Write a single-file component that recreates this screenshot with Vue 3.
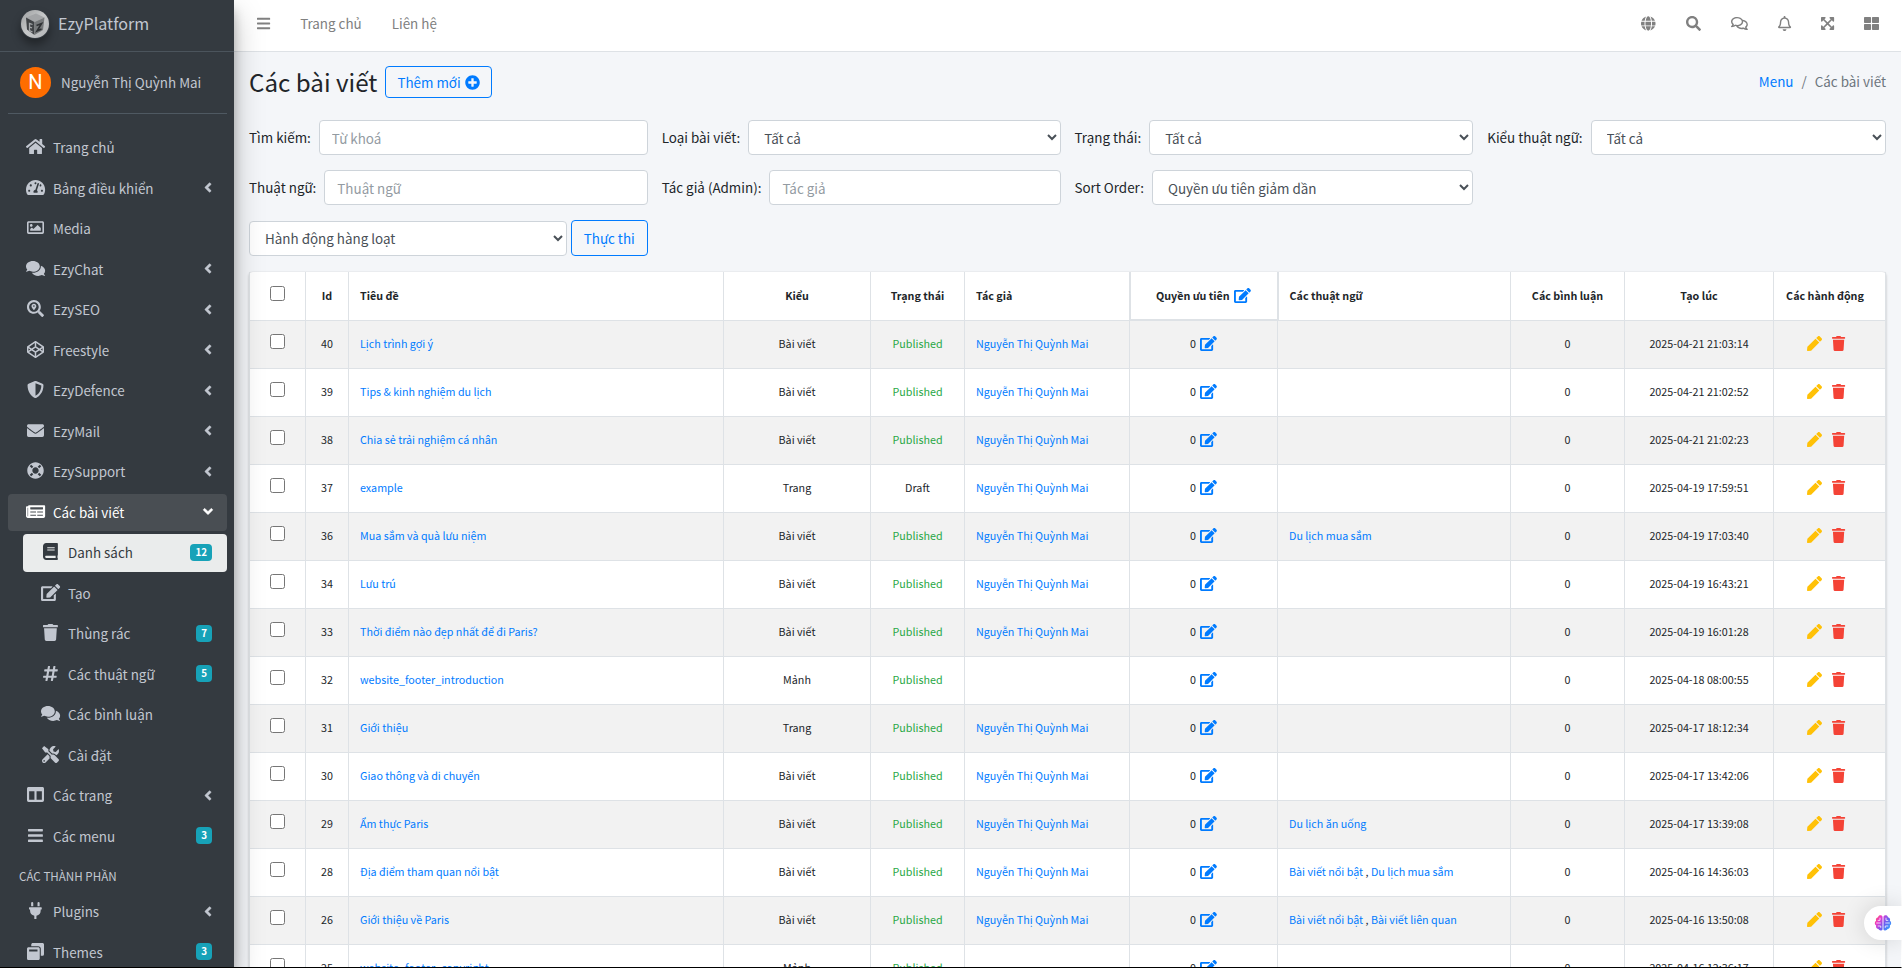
<script setup>
const IC = {
  home: [576, 'M280.37 148.26L96 300.11V464a16 16 0 0 0 16 16l112.06-.29a16 16 0 0 0 15.92-16V368a16 16 0 0 1 16-16h64a16 16 0 0 1 16 16v95.64a16 16 0 0 0 16 16.05L464 480a16 16 0 0 0 16-16V300L295.67 148.26a12.19 12.19 0 0 0-15.3 0zM571.6 251.47L488 182.56V44.05a12 12 0 0 0-12-12h-56a12 12 0 0 0-12 12v72.61L318.47 43a48 48 0 0 0-61 0L4.34 251.47a12 12 0 0 0-1.6 16.9l25.5 31A12 12 0 0 0 45.15 301l235.22-193.74a12.19 12.19 0 0 1 15.3 0L530.9 301a12 12 0 0 0 16.9-1.6l25.5-31a12 12 0 0 0-1.7-16.93z'],
  gauge: [576, 'M288 32C128.94 32 0 160.94 0 320c0 52.8 14.25 102.26 39.06 144.8 5.61 9.62 16.3 15.2 27.44 15.2h443c11.14 0 21.83-5.58 27.44-15.2C561.75 422.26 576 372.8 576 320c0-159.06-128.94-288-288-288zm0 64c14.71 0 26.58 10.13 30.32 23.65-1.11 2.26-2.64 4.23-3.45 6.67l-9.22 27.67c-5.13 3.49-10.97 6.01-17.64 6.01-17.67 0-32-14.33-32-32S270.33 96 288 96zM96 384c-17.67 0-32-14.33-32-32s14.33-32 32-32 32 14.33 32 32-14.33 32-32 32zm48-160c-17.67 0-32-14.33-32-32s14.33-32 32-32 32 14.33 32 32-14.33 32-32 32zm246.77-72.41l-61.33 184C343.13 347.33 352 364.54 352 384c0 11.72-3.38 22.55-8.88 32H232.88c-5.5-9.45-8.88-20.28-8.88-32 0-33.94 26.5-61.43 59.9-63.59l61.34-184.01c4.17-12.56 17.73-19.45 30.36-15.17 12.57 4.19 19.35 17.79 15.17 30.36zm14.66 57.2l15.52-46.55c3.47-1.29 7.13-2.23 11.05-2.23 17.67 0 32 14.33 32 32s-14.33 32-32 32c-11.38-.01-20.89-6.28-26.57-15.22zM480 384c-17.67 0-32-14.33-32-32s14.33-32 32-32 32 14.33 32 32-14.33 32-32 32z'],
  image: [512, 'M464 64H48C21.49 64 0 85.49 0 112v288c0 26.51 21.49 48 48 48h416c26.51 0 48-21.49 48-48V112c0-26.51-21.49-48-48-48zm-6 336H54a6 6 0 0 1-6-6V118a6 6 0 0 1 6-6h404a6 6 0 0 1 6 6v276a6 6 0 0 1-6 6zM128 152c-22.091 0-40 17.909-40 40s17.909 40 40 40 40-17.909 40-40-17.909-40-40-40zM96 352h320v-80l-87.515-87.515c-4.686-4.686-12.284-4.686-16.971 0L192 304l-39.515-39.515c-4.686-4.686-12.284-4.686-16.971 0L96 304v48z'],
  comments: [576, 'M416 192c0-88.4-93.1-160-208-160S0 103.6 0 192c0 34.3 14.1 65.9 38 92-13.4 30.2-35.5 54.2-35.8 54.5-2.2 2.3-2.8 5.7-1.5 8.7S4.8 352 8 352c36.6 0 66.9-12.3 88.7-25 32.2 15.7 70.3 25 111.3 25 114.9 0 208-71.6 208-160zm122 220c23.9-26 38-57.7 38-92 0-66.9-53.5-124.2-129.3-148.1.9 6.6 1.3 13.3 1.3 20.1 0 105.9-107.7 192-240 192-10.8 0-21.3-.8-31.7-1.9C207.8 439.6 281.8 480 368 480c41 0 79.1-9.2 111.3-25 21.8 12.7 52.1 25 88.7 25 3.2 0 6.1-1.9 7.3-4.8 1.3-2.9.7-6.3-1.5-8.7-.3-.3-22.4-24.2-35.8-54.5z'],
  commentsLine: [576, 'M532 386.2c27.5-27.1 44-61.1 44-98.2 0-80-76.5-146.1-176.2-157.9C368.3 72.5 294.3 32 208 32 93.1 32 0 103.6 0 192c0 37 16.5 71 44 98.2-15.3 30.7-37.3 54.5-37.7 54.9-6.3 6.7-8.1 16.5-4.4 25 3.6 8.5 12 14 21.2 14 53.5 0 96.7-20.2 125.2-38.8 9.2 2.1 18.7 3.7 28.4 4.9C208.1 407.6 281.8 448 368 448c20.8 0 40.8-2.4 59.8-6.8C456.3 459.7 499.4 480 553 480c9.2 0 17.5-5.5 21.2-14 3.6-8.5 1.9-18.3-4.4-25-.4-.3-22.5-24.1-37.8-54.8zm-392.8-92.3L122.1 305c-14.1 9.1-28.5 16.3-43.1 21.4 2.7-4.7 5.4-9.7 8-14.8l15.5-31.1L77.7 256C64.2 242.6 48 220.7 48 192c0-60.7 73.3-112 160-112s160 51.3 160 112-73.3 112-160 112c-16.5 0-33-1.9-49-5.6l-19.8-4.5zM498.3 352l-24.7 24.4 15.5 31.1c2.6 5.1 5.3 10.1 8 14.8-14.6-5.1-29-12.3-43.1-21.4l-17.1-11.1-19.9 4.6c-16 3.7-32.5 5.6-49 5.6-54 0-102.2-20.1-131.3-49.7C338 339.5 416 272.9 416 192c0-3.4-.4-6.7-.7-10C479.7 196.5 528 238.8 528 288c0 28.7-16.2 50.6-29.7 64z'],
  seo: [512, 'M505.04 442.66l-99.71-99.69c-4.5-4.5-10.6-7-17-7h-16.3c27.6-35.3 44-79.69 44-127.99C416.03 93.09 322.92 0 208.02 0S0 93.09 0 207.98s93.11 207.98 208.02 207.98c48.3 0 92.71-16.4 128.01-44v16.3c0 6.4 2.5 12.5 7 17l99.71 99.69c9.4 9.4 24.6 9.4 33.9 0l28.3-28.3c9.4-9.4 9.4-24.59.1-33.99zm-297.02-90.7c-79.54 0-144-64.34-144-143.98 0-79.53 64.35-143.98 144-143.98 79.54 0 144 64.34 144 143.98 0 79.53-64.35 143.98-144 143.98zm.02-239.96c-40.78 0-73.84 33.05-73.84 73.83 0 32.96 48.26 93.05 66.75 114.86a9.24 9.24 0 0 0 14.18 0c18.49-21.81 66.75-81.89 66.75-114.86 0-40.78-33.06-73.83-73.84-73.83zm0 96c-13.26 0-24-10.75-24-24 0-13.26 10.75-24 24-24s24 10.74 24 24c0 13.25-10.75 24-24 24z'],
  codepen: [512, 'M502.285 159.704l-234-156c-7.987-4.915-16.511-4.96-24.571 0l-234 156C3.714 163.703 0 170.847 0 177.989v155.999c0 7.143 3.714 14.286 9.715 18.286l234 156.022c7.987 4.915 16.511 4.96 24.571 0l234-156.022c6-3.999 9.715-11.143 9.715-18.286V177.989c-.001-7.142-3.715-14.286-9.716-18.285zM278 63.131l172.286 114.858-76.857 51.429L278 165.703V63.131zm-44 0v102.572l-95.429 63.715-76.857-51.429L234 63.131zM44 219.132l55.143 36.857L44 292.847v-73.715zm190 229.715L61.714 333.989l76.857-51.429L234 346.275v102.572zm22-140.858l-77.715-52 77.715-52 77.715 52-77.715 52zm22 140.858V346.275l95.429-63.715 76.857 51.429L278 448.847zm190-156l-55.143-36.857L468 219.132v73.715z'],
  shield: [512, 'M466.5 83.7l-192-80a48.15 48.15 0 0 0-36.9 0l-192 80C27.7 91.1 16 108.6 16 128c0 198.5 114.5 335.7 221.5 380.3 11.8 4.9 25.1 4.9 36.9 0C360.1 472.6 496 349.3 496 128c0-19.4-11.7-36.9-29.5-44.3zM256.1 446.3l-.1-381 175.9 73.3c-3.3 151.4-82.1 261.1-175.8 307.7z'],
  mail: [512, 'M502.3 190.8c3.9-3.1 9.7-.2 9.7 4.7V400c0 26.5-21.5 48-48 48H48c-26.5 0-48-21.5-48-48V195.6c0-5 5.7-7.8 9.7-4.7 22.4 17.4 52.1 39.5 154.1 113.6 21.1 15.4 56.7 47.8 92.2 47.6 35.7.3 72-32.8 92.3-47.6 102-74.1 131.6-96.3 154-113.7zM256 320c23.2.4 56.6-29.2 73.4-41.4 132.7-96.3 142.8-104.7 173.4-128.7 5.8-4.5 9.2-11.5 9.2-18.9v-19c0-26.5-21.5-48-48-48H48c-26.5 0-48 21.5-48 48v19c0 7.4 3.4 14.3 9.2 18.9 30.6 23.9 40.7 32.4 173.4 128.7 16.8 12.2 50.2 41.8 73.4 41.4z'],
  ring: [512, 'M256 8C119.033 8 8 119.033 8 256s111.033 248 248 248 248-111.033 248-248S392.967 8 256 8zm173.696 119.559l-63.399 63.399c-10.987-18.559-26.67-34.252-45.255-45.255l63.399-63.399a218.396 218.396 0 0 1 45.255 45.255zM256 352c-53.019 0-96-42.981-96-96s42.981-96 96-96 96 42.981 96 96-42.981 96-96 96zM127.559 82.304l63.399 63.399c-18.559 10.987-34.252 26.67-45.255 45.255l-63.399-63.399a218.372 218.372 0 0 1 45.255-45.255zM82.304 384.441l63.399-63.399c10.987 18.559 26.67 34.252 45.255 45.255l-63.399 63.399a218.396 218.396 0 0 1-45.255-45.255zm302.137 45.255l-63.399-63.399c18.559-10.987 34.252-26.67 45.255-45.255l63.399 63.399a218.403 218.403 0 0 1-45.255 45.255z'],
  news: [576, 'M552 64H88c-13.255 0-24 10.745-24 24v8H24c-13.255 0-24 10.745-24 24v272c0 30.928 25.072 56 56 56h472c26.51 0 48-21.49 48-48V88c0-13.255-10.745-24-24-24zM56 400a8 8 0 0 1-8-8V144h16v248a8 8 0 0 1-8 8zm236-16H140c-6.627 0-12-5.373-12-12v-8c0-6.627 5.373-12 12-12h152c6.627 0 12 5.373 12 12v8c0 6.627-5.373 12-12 12zm208 0H348c-6.627 0-12-5.373-12-12v-8c0-6.627 5.373-12 12-12h152c6.627 0 12 5.373 12 12v8c0 6.627-5.373 12-12 12zm-208-96H140c-6.627 0-12-5.373-12-12v-8c0-6.627 5.373-12 12-12h152c6.627 0 12 5.373 12 12v8c0 6.627-5.373 12-12 12zm208 0H348c-6.627 0-12-5.373-12-12v-8c0-6.627 5.373-12 12-12h152c6.627 0 12 5.373 12 12v8c0 6.627-5.373 12-12 12zm0-96H140c-6.627 0-12-5.373-12-12v-40c0-6.627 5.373-12 12-12h360c6.627 0 12 5.373 12 12v40c0 6.627-5.373 12-12 12z'],
  book: [448, 'M448 360V24c0-13.3-10.7-24-24-24H96C43 0 0 43 0 96v320c0 53 43 96 96 96h328c13.3 0 24-10.7 24-24v-16c0-7.5-3.5-14.3-8.9-18.7-4.2-15.4-4.2-59.3 0-74.7 5.4-4.3 8.9-11.1 8.9-18.6zM128 134c0-3.3 2.7-6 6-6h212c3.3 0 6 2.7 6 6v20c0 3.3-2.7 6-6 6H134c-3.3 0-6-2.7-6-6v-20zm0 64c0-3.3 2.7-6 6-6h212c3.3 0 6 2.7 6 6v20c0 3.3-2.7 6-6 6H134c-3.3 0-6-2.7-6-6v-20zm253.4 250H96c-17.7 0-32-14.3-32-32 0-17.6 14.4-32 32-32h285.4c-1.9 17.1-1.9 46.9 0 64z'],
  edit: [576, 'M402.6 83.2l90.2 90.2c3.8 3.8 3.8 10 0 13.8L274.4 405.6l-92.8 10.3c-12.4 1.4-22.9-9.1-21.5-21.5l10.3-92.8L388.8 83.2c3.8-3.8 10-3.8 13.8 0zm162-22.9l-48.8-48.8c-15.2-15.2-39.9-15.2-55.2 0l-35.4 35.4c-3.8 3.8-3.8 10 0 13.8l90.2 90.2c3.8 3.8 10 3.8 13.8 0l35.4-35.4c15.2-15.3 15.2-40 0-55.2zM384 346.2V448H64V128h229.8c3.2 0 6.2-1.3 8.5-3.5l40-40c7.6-7.6 2.2-20.5-8.5-20.5H48C21.5 64 0 85.5 0 112v352c0 26.5 21.5 48 48 48h352c26.5 0 48-21.5 48-48V306.2c0-10.7-12.9-16-20.5-8.5l-40 40c-2.2 2.3-3.5 5.3-3.5 8.5z'],
  trash: [448, 'M432 32H312l-9.4-18.7A24 24 0 0 0 281.1 0H166.8a23.72 23.72 0 0 0-21.4 13.3L136 32H16A16 16 0 0 0 0 48v32a16 16 0 0 0 16 16h416a16 16 0 0 0 16-16V48a16 16 0 0 0-16-16zM53.2 467a48 48 0 0 0 47.9 45h245.8a48 48 0 0 0 47.9-45L416 128H32z'],
  hash: [448, 'M440.667 182.109l7.143-40c1.313-7.355-4.342-14.109-11.813-14.109h-74.81l14.623-81.891C377.123 38.754 371.468 32 363.997 32h-40.632a12 12 0 0 0-11.813 9.891L296.175 128H197.54l14.623-81.891C213.477 38.754 207.822 32 200.35 32h-40.632a12 12 0 0 0-11.813 9.891L132.528 128H53.432a12 12 0 0 0-11.813 9.891l-7.143 40C33.163 185.246 38.818 192 46.289 192h74.81L98.242 320H19.146a12 12 0 0 0-11.813 9.891l-7.143 40C-1.123 377.246 4.532 384 12.003 384h74.81L72.19 465.891C70.877 473.246 76.532 480 84.003 480h40.632a12 12 0 0 0 11.813-9.891L151.826 384h98.634l-14.623 81.891C234.523 473.246 240.178 480 247.65 480h40.632a12 12 0 0 0 11.813-9.891L315.472 384h79.096a12 12 0 0 0 11.813-9.891l7.143-40c1.313-7.355-4.342-14.109-11.813-14.109h-74.81l22.857-128h79.096a12 12 0 0 0 11.813-9.891zM261.889 320h-98.634l22.857-128h98.634l-22.857 128z'],
  tools: [512, 'M501.1 395.7L384 278.6c-23.1-23.1-57.6-27.6-85.4-13.9L192 158.1V96L64 0 0 64l96 128h62.1l106.6 106.6c-13.6 27.8-9.2 62.3 13.9 85.4l117.1 117.1c14.6 14.6 38.2 14.6 52.7 0l52.7-52.7c14.5-14.6 14.5-38.2 0-52.7zM331.7 225c28.3 0 54.9 11 74.9 31l19.4 19.4c15.8-6.9 30.8-16.5 43.8-29.5 37.1-37.1 49.7-89.3 37.9-136.7-2.2-9-13.5-12.1-20.1-5.5l-74.4 74.4-67.9-11.3L334 98.9l74.4-74.4c6.6-6.6 3.4-17.9-5.7-20.2-47.4-11.7-99.6.9-136.6 37.9-28.5 28.5-41.9 66.1-41.2 103.6l82.1 82.1c8.1-1.9 16.5-2.9 24.7-2.9zm-103.9 82l-56.7-56.7L18.7 402.8c-25 25-25 65.5 0 90.5s65.5 25 90.5 0l123.6-123.6c-7.6-19.9-9.9-41.6-5-62.7zM64 472c-13.2 0-24-10.8-24-24 0-13.3 10.7-24 24-24s24 10.7 24 24c0 13.2-10.7 24-24 24z'],
  columns: [512, 'M464 32H48C21.49 32 0 53.49 0 80v352c0 26.51 21.49 48 48 48h416c26.51 0 48-21.49 48-48V80c0-26.51-21.49-48-48-48zM224 416H64V160h160v256zm224 0H288V160h160v256z'],
  bars: [448, 'M16 132h416c8.837 0 16-7.163 16-16V76c0-8.837-7.163-16-16-16H16C7.163 60 0 67.163 0 76v40c0 8.837 7.163 16 16 16zm0 160h416c8.837 0 16-7.163 16-16v-40c0-8.837-7.163-16-16-16H16c-8.837 0-16 7.163-16 16v40c0 8.837 7.163 16 16 16zm0 160h416c8.837 0 16-7.163 16-16v-40c0-8.837-7.163-16-16-16H16c-8.837 0-16 7.163-16 16v40c0 8.837 7.163 16 16 16z'],
  plug: [384, 'M320 32a32 32 0 0 0-64 0v96h64zm48 128H16A16 16 0 0 0 0 176v32a16 16 0 0 0 16 16h16v32a160.07 160.07 0 0 0 128 156.8V512h64v-99.2A160.07 160.07 0 0 0 352 256v-32h16a16 16 0 0 0 16-16v-32a16 16 0 0 0-16-16zM128 32a32 32 0 0 0-64 0v96h64z'],
  restore: [512, 'M512 48v288c0 26.5-21.5 48-48 48h-48V176c0-44.1-35.9-80-80-80H128V48c0-26.5 21.5-48 48-48h288c26.5 0 48 21.5 48 48zM384 176v288c0 26.5-21.5 48-48 48H48c-26.5 0-48-21.5-48-48V176c0-26.5 21.5-48 48-48h288c26.5 0 48 21.5 48 48zm-68 28c0-6.6-5.4-12-12-12H76c-6.6 0-12 5.4-12 12v52h252v-52z'],
  angle: [256, 'M31.7 239l136-136c9.4-9.4 24.6-9.4 33.9 0l22.6 22.6c9.4 9.4 9.4 24.6 0 33.9L127.9 256l96.4 96.4c9.4 9.4 9.4 24.6 0 33.9L201.7 409c-9.4 9.4-24.6 9.4-33.9 0l-136-136c-9.5-9.4-9.5-24.6-.1-34z'],
  globe: [496, 'M336.5 160C322 70.7 287.8 8 248 8s-74 62.7-88.5 152h177zM152 256c0 22.2 1.2 43.5 3.3 64h185.3c2.1-20.5 3.3-41.8 3.3-64s-1.2-43.5-3.3-64H155.3c-2.1 20.5-3.3 41.8-3.3 64zm324.7-96c-28.6-67.9-86.5-120.4-158-141.6 24.4 33.8 41.2 84.7 50 141.6h108zM177.2 18.4C105.8 39.6 47.8 92.1 19.3 160h108c8.7-56.9 25.5-107.8 49.9-141.6zM487.4 192H372.7c2.1 21 3.3 42.5 3.3 64s-1.2 43-3.3 64h114.6c5.5-20.5 8.6-41.8 8.6-64s-3.1-43.5-8.5-64zM120 256c0-21.5 1.2-43 3.3-64H8.6C3.2 212.5 0 233.8 0 256s3.2 43.5 8.6 64h114.6c-2-21-3.2-42.5-3.2-64zm39.5 96c14.5 89.3 48.7 152 88.5 152s74-62.7 88.5-152h-177zm159.3 141.6c71.4-21.2 129.4-73.7 158-141.6h-108c-8.8 56.9-25.6 107.8-50 141.6zM19.3 352c28.6 67.9 86.5 120.4 158 141.6-24.4-33.8-41.2-84.7-50-141.6h-108z'],
  search: [512, 'M505 442.7L405.3 343c-4.5-4.5-10.6-7-17-7H372c27.6-35.3 44-79.7 44-128C416 93.1 322.9 0 208 0S0 93.1 0 208s93.1 208 208 208c48.3 0 92.7-16.4 128-44v16.3c0 6.4 2.5 12.5 7 17l99.7 99.7c9.4 9.4 24.6 9.4 33.9 0l28.3-28.3c9.4-9.4 9.4-24.6.1-34zM208 336c-70.7 0-128-57.2-128-128 0-70.7 57.2-128 128-128 70.7 0 128 57.2 128 128 0 70.7-57.2 128-128 128z'],
  bell: [448, 'M439.39 362.29c-19.32-20.76-55.47-51.99-55.47-154.29 0-77.7-54.48-139.9-127.94-155.16V32c0-17.67-14.32-32-31.98-32s-31.98 14.33-31.98 32v20.84C118.56 68.1 64.08 130.3 64.08 208c0 102.3-36.15 133.53-55.47 154.29-6 6.45-8.66 14.16-8.61 21.71.11 16.4 12.98 32 32.1 32h383.8c19.12 0 32-15.6 32.1-32 .05-7.55-2.61-15.27-8.61-21.71zM67.53 368c21.22-27.97 44.42-74.33 44.53-159.42 0-.2-.06-.38-.06-.58 0-61.86 50.14-112 112-112s112 50.14 112 112c0 .2-.06.38-.06.58.11 85.1 23.31 131.46 44.53 159.42H67.53zM224 512c35.32 0 63.97-28.65 63.97-64H160.03c0 35.35 28.65 64 63.97 64z'],
  expand: [448, 'M448 344v112a23.94 23.94 0 0 1-24 24H312c-21.39 0-32.09-25.9-17-41l36.2-36.2L224 295.6 116.77 402.9 153 439c15.09 15.1 4.39 41-17 41H24a23.94 23.94 0 0 1-24-24V344c0-21.4 25.89-32.1 41-17l36.19 36.2L184.46 256 77.18 148.7 41 185c-15.1 15.1-41 4.4-41-17V56a23.94 23.94 0 0 1 24-24h112c21.39 0 32.09 25.9 17 41l-36.2 36.2L224 216.4l107.23-107.3L295 73c-15.09-15.1-4.39-41 17-41h112a23.94 23.94 0 0 1 24 24v112c0 21.4-25.89 32.1-41 17l-36.19-36.2L263.54 256l107.28 107.3L407 327.1c15.1-15.2 41-4.5 41 16.9z'],
  grid: [512, 'M296 32h192c13.255 0 24 10.745 24 24v160c0 13.255-10.745 24-24 24H296c-13.255 0-24-10.745-24-24V56c0-13.255 10.745-24 24-24zm-80 0H24C10.745 32 0 42.745 0 56v160c0 13.255 10.745 24 24 24h192c13.255 0 24-10.745 24-24V56c0-13.255-10.745-24-24-24zM0 296v160c0 13.255 10.745 24 24 24h192c13.255 0 24-10.745 24-24V296c0-13.255-10.745-24-24-24H24c-13.255 0-24 10.745-24 24zm296 184h192c13.255 0 24-10.745 24-24V296c0-13.255-10.745-24-24-24H296c-13.255 0-24 10.745-24 24v160c0 13.255 10.745 24 24 24z'],
  plus: [512, 'M256 8C119 8 8 119 8 256s111 248 248 248 248-111 248-248S393 8 256 8zm144 276c0 6.6-5.4 12-12 12h-92v92c0 6.6-5.4 12-12 12h-56c-6.6 0-12-5.4-12-12v-92h-92c-6.6 0-12-5.4-12-12v-56c0-6.6 5.4-12 12-12h92v-92c0-6.6 5.4-12 12-12h56c6.6 0 12 5.4 12 12v92h92c6.6 0 12 5.4 12 12v56z'],
  pen: [512, 'M290.74 93.24l128.02 128.02-277.99 277.99-114.14 12.6C11.35 513.54-1.56 500.62.14 485.34l12.7-114.22 277.9-277.88zm207.2-19.06l-60.11-60.11c-18.75-18.75-49.16-18.75-67.91 0l-56.55 56.55 128.02 128.02 56.55-56.55c18.75-18.76 18.75-49.16 0-67.91z'],
}

const FaIcon = (props) => {
  const [w, d] = IC[props.name]
  return h('svg', { viewBox: `0 0 ${w} 512`, class: 'fa', fill: 'currentColor', 'aria-hidden': 'true' }, [h('path', { d })])
}
FaIcon.props = ['name']

const menu = [
  { icon: 'home', text: 'Trang chủ' },
  { icon: 'gauge', text: 'Bảng điều khiển', arrow: true },
  { icon: 'image', text: 'Media' },
  { icon: 'comments', text: 'EzyChat', arrow: true },
  { icon: 'seo', text: 'EzySEO', arrow: true },
  { icon: 'codepen', text: 'Freestyle', arrow: true },
  { icon: 'shield', text: 'EzyDefence', arrow: true },
  { icon: 'mail', text: 'EzyMail', arrow: true },
  { icon: 'ring', text: 'EzySupport', arrow: true },
  { icon: 'news', text: 'Các bài viết', arrow: true, open: true },
  { icon: 'book', text: 'Danh sách', badge: 12, sub: true, current: true },
  { icon: 'edit', text: 'Tạo', sub: true },
  { icon: 'trash', text: 'Thùng rác', badge: 7, sub: true },
  { icon: 'hash', text: 'Các thuật ngữ', badge: 5, sub: true },
  { icon: 'comments', text: 'Các bình luận', sub: true },
  { icon: 'tools', text: 'Cài đặt', sub: true },
  { icon: 'columns', text: 'Các trang', arrow: true },
  { icon: 'bars', text: 'Các menu', badge: 3 },
  { header: 'CÁC THÀNH PHẦN' },
  { icon: 'plug', text: 'Plugins', arrow: true },
  { icon: 'restore', text: 'Themes', badge: 3 },
]

const tools = [
  ['globe', 'Ngôn ngữ'],
  ['search', 'Tìm kiếm'],
  ['commentsLine', 'Tin nhắn'],
  ['bell', 'Thông báo'],
  ['expand', 'Toàn màn hình'],
  ['grid', 'Ứng dụng'],
]

const filters = [
  { id: 'f-key', label: 'Tìm kiếm:', hint: 'Từ khoá' },
  { id: 'f-type', label: 'Loại bài viết:', option: 'Tất cả' },
  { id: 'f-status', label: 'Trạng thái:', option: 'Tất cả' },
  { id: 'f-termtype', label: 'Kiểu thuật ngữ:', option: 'Tất cả' },
  { id: 'f-term', label: 'Thuật ngữ:', hint: 'Thuật ngữ' },
  { id: 'f-author', label: 'Tác giả (Admin):', hint: 'Tác giả' },
  { id: 'f-sort', label: 'Sort Order:', option: 'Quyền ưu tiên giảm dần' },
]

const me = 'Nguyễn Thị Quỳnh Mai'
const rows = [
  [40, 'Lịch trình gợi ý', 'Bài viết', me, [], '2025-04-21 21:03:14'],
  [39, 'Tips & kinh nghiệm du lịch', 'Bài viết', me, [], '2025-04-21 21:02:52'],
  [38, 'Chia sẻ trải nghiệm cá nhân', 'Bài viết', me, [], '2025-04-21 21:02:23'],
  [37, 'example', 'Trang', me, [], '2025-04-19 17:59:51', true],
  [36, 'Mua sắm và quà lưu niệm', 'Bài viết', me, ['Du lịch mua sắm'], '2025-04-19 17:03:40'],
  [34, 'Lưu trú', 'Bài viết', me, [], '2025-04-19 16:43:21'],
  [33, 'Thời điểm nào đẹp nhất để đi Paris?', 'Bài viết', me, [], '2025-04-19 16:01:28'],
  [32, 'website_footer_introduction', 'Mảnh', '', [], '2025-04-18 08:00:55'],
  [31, 'Giới thiệu', 'Trang', me, [], '2025-04-17 18:12:34'],
  [30, 'Giao thông và di chuyển', 'Bài viết', me, [], '2025-04-17 13:42:06'],
  [29, 'Ẩm thực Paris', 'Bài viết', me, ['Du lịch ăn uống'], '2025-04-17 13:39:08'],
  [28, 'Địa điểm tham quan nổi bật', 'Bài viết', me, ['Bài viết nổi bật', 'Du lịch mua sắm'], '2025-04-16 14:36:03'],
  [26, 'Giới thiệu về Paris', 'Bài viết', me, ['Bài viết nổi bật', 'Bài viết liên quan'], '2025-04-16 13:50:08'],
  [25, 'website_footer_copyright', 'Mảnh', '', [], '2025-04-16 12:36:17'],
].map(([id, title, type, author, terms, time, draft]) => ({ id, title, type, author, terms, time, draft }))
</script>

<script>
import { h } from 'vue'
</script>

<template>
  <div class="app">
    <aside class="sidebar">
      <a class="brand" href="#">
        <svg class="logo" viewBox="0 0 30 30" aria-hidden="true">
          <defs>
            <linearGradient id="logoRing" x1="0" y1="0" x2="1" y2="1">
              <stop offset="0" stop-color="#9c9ea0" />
              <stop offset=".5" stop-color="#c6c8c9" />
              <stop offset="1" stop-color="#b2b4b6" />
            </linearGradient>
          </defs>
          <circle cx="15" cy="15" r="14" fill="url(#logoRing)" />
          <path d="M6 8.500 16 4.500l8.500 4L14.500 13z" fill="#a3a5a7" />
          <path d="M6 8.500l8.500 4.500v13L7 20.500z" fill="#3f4245" />
          <path d="M14.500 13l10-4.500-1.500 12.500-8.500 5z" fill="#76797b" />
          <path d="M12.500 15.500l-3-1v7l3 1.500M9.500 18l2.500.8" fill="none" stroke="#a4a7a9" stroke-width="1.300" />
          <path d="M16.500 16.500l5-2-4.500 7.500 4.500-2" fill="none" stroke="#2f3235" stroke-width="1.600" />
        </svg>
        <span>EzyPlatform</span>
      </a>
      <div class="scroll">
        <a class="user" href="#">
          <span class="avatar">N</span>
          <span>{{ me }}</span>
        </a>
        <nav class="nav" aria-label="Menu">
          <template v-for="m in menu" :key="m.text || m.header">
            <h2 v-if="m.header" class="nav-header">{{ m.header }}</h2>
            <a v-else href="#" class="nav-link" :class="{ sub: m.sub, open: m.open, current: m.current }">
              <span class="nav-icon"><FaIcon :name="m.icon" /></span>
              <span class="nav-text">{{ m.text }}</span>
              <span v-if="m.badge" class="badge">{{ m.badge }}</span>
              <FaIcon v-if="m.arrow" name="angle" class="arrow" />
            </a>
          </template>
        </nav>
      </div>
    </aside>

    <div class="main">
      <header class="topbar">
        <button class="tool" type="button" aria-label="Menu"><FaIcon name="bars" /></button>
        <a class="toplink" href="#">Trang chủ</a>
        <a class="toplink" href="#">Liên hệ</a>
        <div class="tools">
          <button v-for="[name, label] in tools" :key="name" class="tool" type="button" :aria-label="label">
            <FaIcon :name="name" />
          </button>
        </div>
      </header>

      <main class="content">
        <div class="heading">
          <h1>Các bài viết</h1>
          <a class="btn" href="#">Thêm mới <FaIcon name="plus" /></a>
          <nav class="crumbs" aria-label="Breadcrumb">
            <a href="#">Menu</a><span class="slash">/</span><span>Các bài viết</span>
          </nav>
        </div>

        <form class="filters" @submit.prevent>
          <div v-for="f in filters" :key="f.id" class="field">
            <label :for="f.id">{{ f.label }}</label>
            <input v-if="f.hint" :id="f.id" type="text" class="control" :placeholder="f.hint" />
            <select v-else :id="f.id" class="control"><option>{{ f.option }}</option></select>
          </div>
          <span class="blank"></span>
          <div class="field bulk">
            <select class="control" aria-label="Hành động hàng loạt"><option>Hành động hàng loạt</option></select>
            <button class="btn" type="submit">Thực thi</button>
          </div>
        </form>

        <div class="card">
          <table>
            <colgroup>
              <col class="c-check" /><col class="c-id" /><col class="c-title" /><col class="c-type" /><col class="c-status" /><col class="c-author" />
              <col class="c-prio" /><col class="c-terms" /><col class="c-comments" /><col class="c-time" /><col class="c-actions" />
            </colgroup>
            <thead>
              <tr>
                <th><input type="checkbox" aria-label="Chọn tất cả" /></th>
                <th>Id</th>
                <th class="left">Tiêu đề</th>
                <th>Kiểu</th>
                <th>Trạng thái</th>
                <th class="left">Tác giả</th>
                <th class="prio">Quyền ưu tiên <a href="#" aria-label="Sửa quyền ưu tiên"><FaIcon name="edit" /></a></th>
                <th class="left">Các thuật ngữ</th>
                <th>Các bình luận</th>
                <th>Tạo lúc</th>
                <th>Các hành động</th>
              </tr>
            </thead>
            <tbody>
              <tr v-for="r in rows" :key="r.id">
                <td><input type="checkbox" :aria-label="r.title" /></td>
                <td>{{ r.id }}</td>
                <td class="left"><a href="#">{{ r.title }}</a></td>
                <td>{{ r.type }}</td>
                <td :class="{ published: !r.draft }">{{ r.draft ? 'Draft' : 'Published' }}</td>
                <td class="left"><a v-if="r.author" href="#">{{ r.author }}</a></td>
                <td>0 <a href="#" aria-label="Sửa quyền ưu tiên"><FaIcon name="edit" /></a></td>
                <td class="left"><template v-for="(t, i) in r.terms" :key="t"><template v-if="i"> , </template><a href="#">{{ t }}</a></template></td>
                <td>0</td>
                <td>{{ r.time }}</td>
                <td>
                  <span class="actions">
                    <a href="#" class="act-edit" aria-label="Sửa"><FaIcon name="pen" /></a>
                    <a href="#" class="act-del" aria-label="Xoá"><FaIcon name="trash" /></a>
                  </span>
                </td>
              </tr>
            </tbody>
          </table>
        </div>
      </main>
    </div>

    <button class="assistant" type="button" aria-label="AI">
      <svg viewBox="0 0 24 24" aria-hidden="true">
        <defs>
          <linearGradient id="brain" x1="0" y1="0.200" x2="1" y2="0.800">
            <stop offset="0" stop-color="#ff4d6a" />
            <stop offset=".25" stop-color="#e63ad0" />
            <stop offset=".6" stop-color="#6a5cf0" />
            <stop offset="1" stop-color="#2fa8ff" />
          </linearGradient>
        </defs>
        <path fill="url(#brain)" d="M11.400 3.500C10 1 6 1.300 5.500 4.300 3 4.500 2 7 2.800 9 .5 10.500.5 14 2.800 15.300 2 18 4 20 6 20c1 2.500 4.500 2.500 5.400.5zM12.600 3.500C14 1 18 1.300 18.500 4.300 21 4.500 22 7 21.200 9c2.300 1.500 2.300 5 0 6.300.8 2.700-1.200 4.700-3.200 4.700-1 2.500-4.500 2.500-5.400.5z" />
        <path fill="none" stroke="#fff" stroke-width="1" stroke-linecap="round" d="M8 5.500v3H5.500M3.500 12h5M5.500 16H9v2M16 5.500v3h2.500M20.500 12h-5M18.500 16H15v2" />
      </svg>
    </button>
  </div>
</template>

<style>
body { background: #f4f6f9; }
</style>

<style scoped>
* { box-sizing: border-box; }
.app {
  display: flex; height: 100vh; overflow: hidden; border-right: 1px solid #fff; border-bottom: 1px solid #000; background: #f4f6f9; color: #212529;
  font-family: "Noto Sans CJK SC", sans-serif; font-size: 15px; line-height: 1.5; font-size-adjust: 0.486;
}
a { color: #007bff; text-decoration: none; }
button, input, select { font: inherit; font-size-adjust: inherit; }
.fa { height: 15px; width: auto; overflow: visible; vertical-align: -2px; }

.sidebar {
  flex: none; width: 234px; background: #343a40; color: #c2c7d0; z-index: 2; display: flex; flex-direction: column;
  box-shadow: 0 14px 28px rgba(0, 0, 0, .25), 0 10px 10px rgba(0, 0, 0, .22);
}
.brand {
  flex: none; height: 52px; padding: 0 0 4px 20px; display: flex; align-items: center; gap: 8px;
  border-bottom: 1px solid #4b545c; color: #c2c7d0; font-size: 18px;
}
.logo { width: 30px; height: 30px; border-radius: 50%; box-shadow: 0 6px 8px rgba(0, 0, 0, .35); }
.scroll { padding: 0 7px 0 8px; overflow: hidden; }
.user {
  display: flex; align-items: center; gap: 10px; height: 62px; padding-left: 12px; margin-bottom: 15px;
  border-bottom: 1px solid #4f5962; color: #c2c7d0;
}
.avatar {
  width: 31px; height: 31px; border-radius: 50%; background: #ff6d00; color: #fff; text-align: center;
  font: 20px/31px Roboto, sans-serif; font-size-adjust: none;
}
.nav-link {
  display: flex; align-items: center; padding: 7px 15px 8px; margin-bottom: 3px; border-radius: 4px; color: #c2c7d0;
}
.nav-link.sub { margin-left: 15px; }
.nav-link.open { background: #494e53; color: #fff; }
.nav-link.current { background: #eaecec; color: #343a40; }
.nav-icon { width: 25px; margin-right: 5px; text-align: center; line-height: 1; }
.nav-icon .fa { height: 17px; vertical-align: -1px; }
.nav-text { flex: 1; }
.arrow { height: 15px; width: 8px; stroke: currentColor; stroke-width: 16; }
.open .arrow { transform: rotate(-90deg); }
.badge {
  padding: 0 5px; border-radius: 4px; background: #17a2b8; color: #fff; font-size: 11px; font-weight: 700; line-height: 17px;
}
.nav-header { margin: 0; padding: 8px 11px 7px; font-size: 13px; font-weight: 400; line-height: 20px; }

.main { flex: 1; min-width: 0; display: flex; flex-direction: column; }
.topbar {
  flex: none; height: 52px; padding: 0 7px 4px 8px; display: flex; align-items: center; border-bottom: 1px solid #dee2e6; background: #fff;
}
.tool { display: flex; align-items: center; justify-content: center; padding: 0 15px; border: 0; background: none; color: #808080; }
.toplink { padding: 0 15px; color: #808080; }
.tools { display: flex; margin-left: auto; }

.content { padding: 14px 15px 0; }
.heading { display: flex; align-items: center; gap: 8px; margin-bottom: 22px; }
h1 { margin: 0; font-size: 27px; font-weight: 400; line-height: 32px; }
.btn {
  display: inline-flex; align-items: center; gap: 4px; padding: 4px 11px; border: 1px solid #007bff; border-radius: 4px;
  background: transparent; color: #007bff; white-space: nowrap; line-height: 22px;
}
.crumbs { display: flex; gap: 8px; margin-left: auto; align-self: flex-start; padding-top: 4px; color: #6c757d; }

.filters { display: grid; grid-template-columns: 399fr 399fr 399fr 399fr; column-gap: 14px; row-gap: 15px; }
.field { display: flex; align-items: center; gap: 8px; min-width: 0; }
.field label { white-space: nowrap; }
.control {
  flex: 1; min-width: 0; height: 35px; padding: 0 12px; border: 1px solid #ced4da; border-radius: 4px; background-color: #fff; color: #495057;
}
select.control { padding: 0 0 0 11px; }
.control::placeholder { color: #939ba2; opacity: 1; }
.bulk { gap: 4px; }
.bulk .btn { height: 36px; padding: 0 12px; }

.card { margin-top: 16px; border-radius: 4px; background: #fff; box-shadow: 0 0 1px rgba(0, 0, 0, .13), 0 1px 3px rgba(0, 0, 0, .2); }
table { width: 100%; border-collapse: collapse; table-layout: fixed; font-size: 12px; line-height: 18px; }
th, td { height: 48px; padding: 0 11px; border: 1px solid #dee2e6; text-align: center; white-space: nowrap; }
thead th { border-top: 0; }
th:last-child, td:last-child { padding-right: 20px; }
.left { text-align: left; }
.prio { border: 2px solid #dee2e6; border-top: 0; }
th .fa, td .fa { height: 15px; margin-left: 2px; vertical-align: -3px; }
tbody tr:nth-child(odd) { background: #f2f2f2; }
.published { color: #28a745; }
.actions { display: inline-flex; gap: 8px; }
.act-edit { color: #ffc107; }
.act-del { color: #f44336; }
input[type="checkbox"] { width: 15px; height: 15px; margin: 0; vertical-align: 0; }
.c-check { width: 56px; } .c-id { width: 43px; } .c-type { width: 147px; } .c-status { width: 94px; } .c-author { width: 165px; }
.c-prio { width: 148px; } .c-terms { width: 233px; } .c-comments { width: 114px; } .c-time { width: 149px; } .c-actions { width: 112px; }

.assistant {
  position: fixed; right: 0; bottom: 28px; z-index: 3; width: 38px; height: 34px; padding: 0 0 0 10px; border: 0;
  border-radius: 17px 0 0 17px; background: #fff; box-shadow: 0 0 24px rgba(0, 0, 0, .14); display: flex; align-items: center;
}
.assistant svg { width: 18px; height: 18px; }
</style>
